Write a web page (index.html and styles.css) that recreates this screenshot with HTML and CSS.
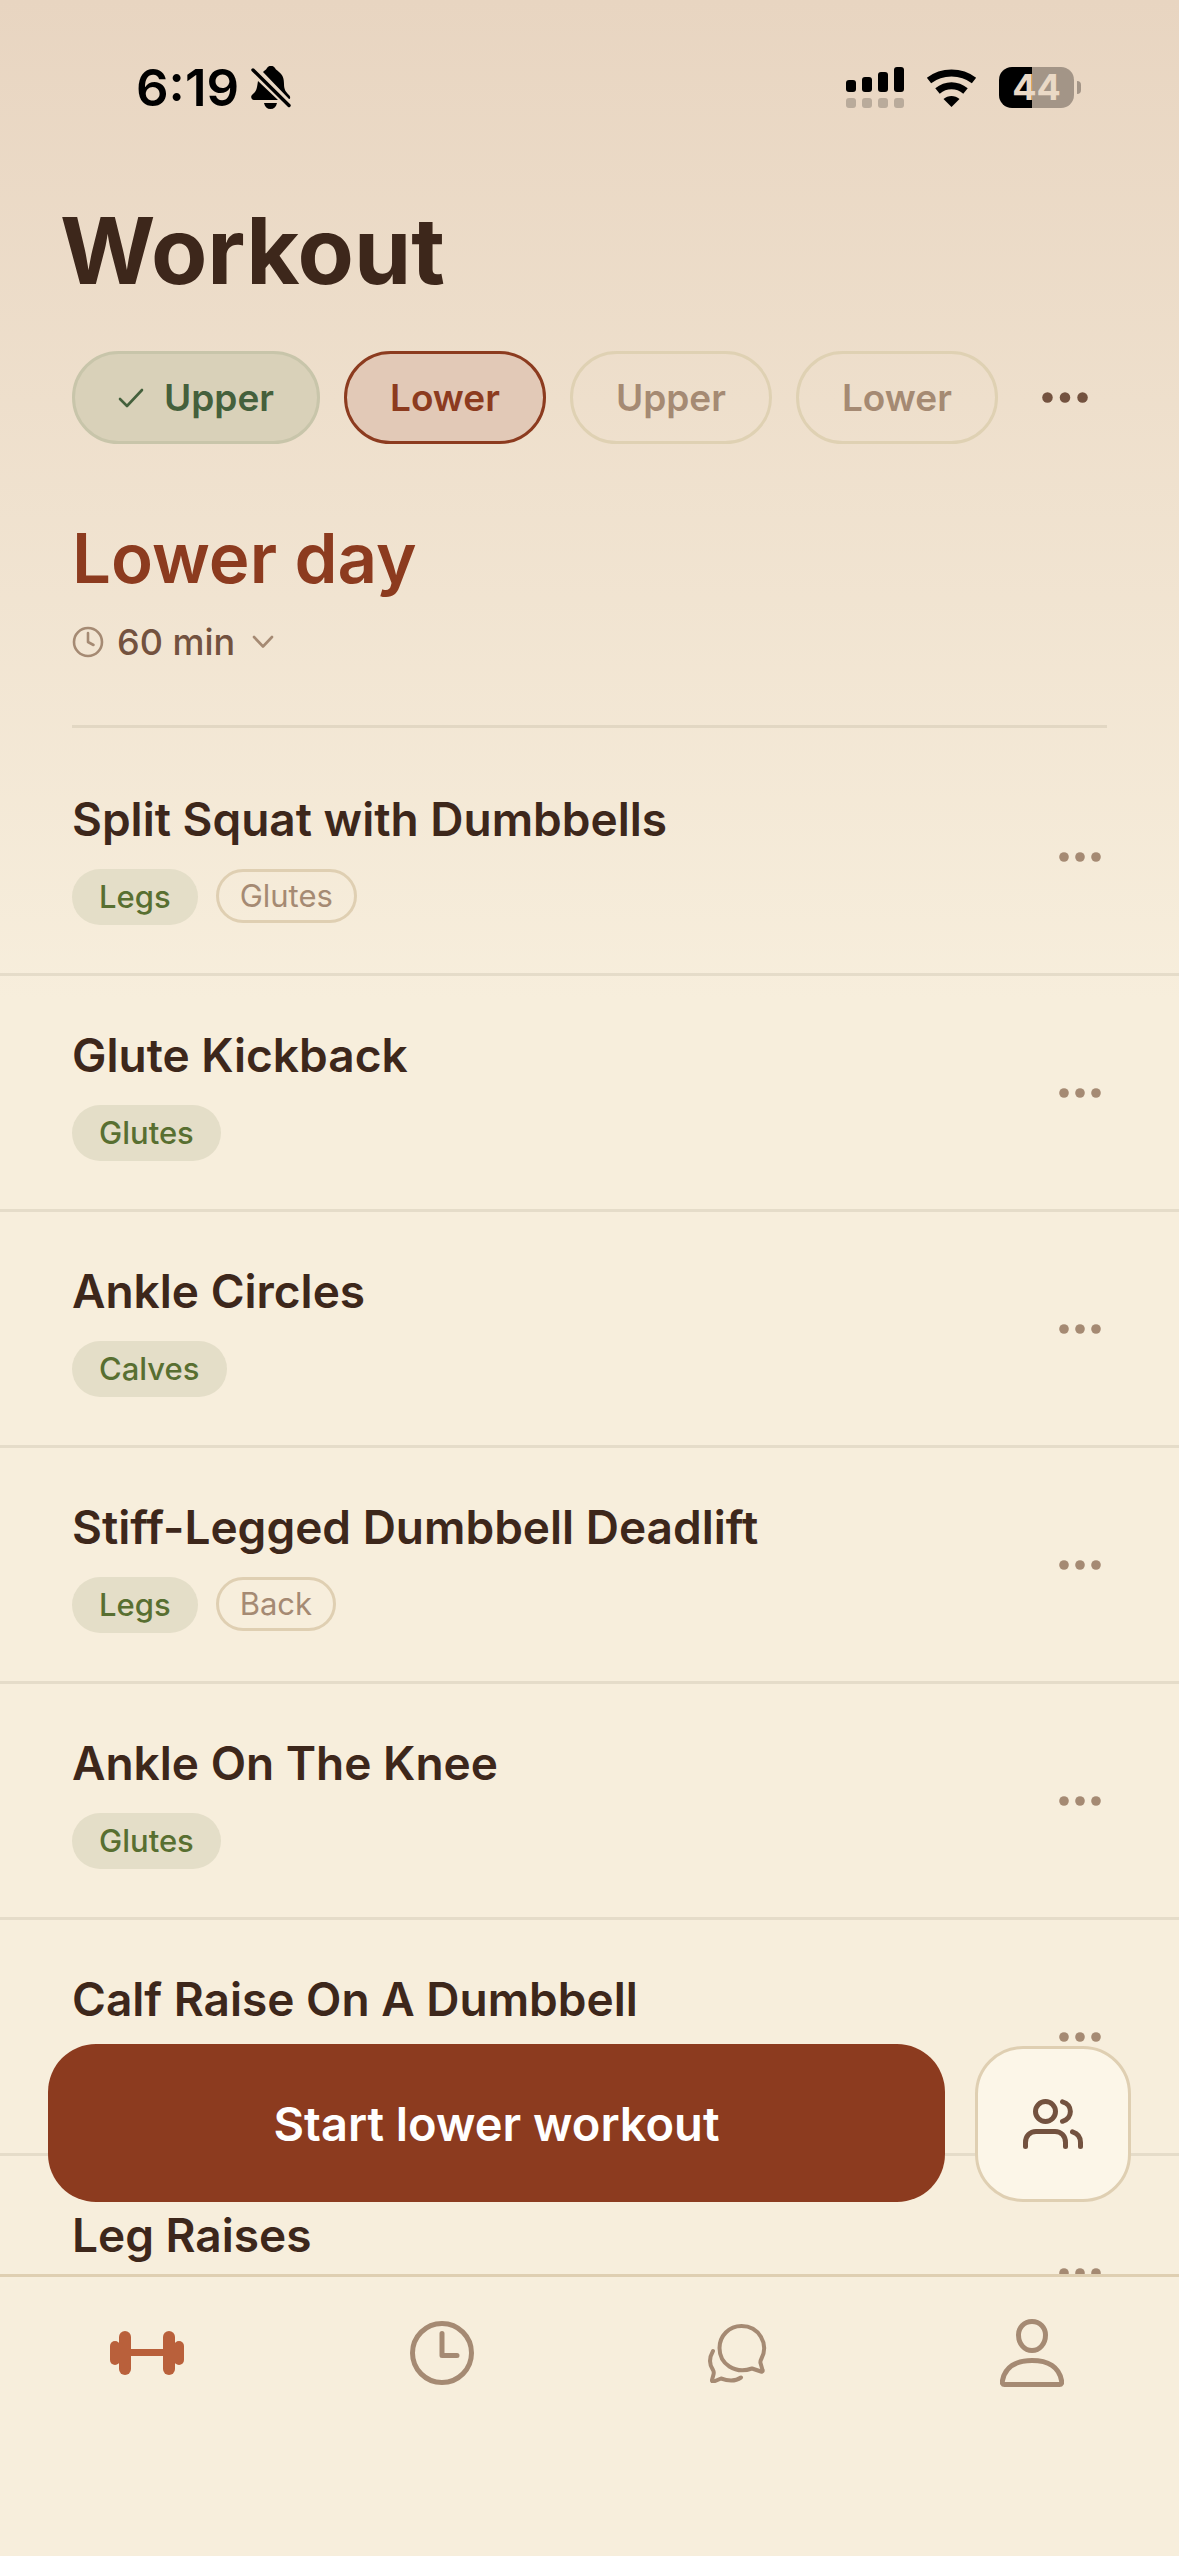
FILE: index.html
```html
<!DOCTYPE html>
<html lang="en">
  <head>
    <meta charset="UTF-8" />
    <meta name="viewport" content="width=device-width, initial-scale=1.0" />
    <title>Workout</title>
    <link rel="stylesheet" href="styles.css">
  </head>
  <body>
    <!-- Shared icons -->
    <svg width="0" height="0" class="sprite" aria-hidden="true">
      <symbol id="dots" viewBox="0 0 42 10">
        <circle cx="5" cy="5" r="4.8" />
        <circle cx="21" cy="5" r="4.8" />
        <circle cx="37" cy="5" r="4.8" />
      </symbol>
    </svg>

    <div class="status-bar">
      <div class="status-left">
        <span class="time">6:19</span>
        <svg class="bell" width="40" height="43" viewBox="0 0 40 43">
          <path d="M7 15 L27 34 H3 C0 34 -1 30 2 28 C6 25 6 21 7 15 Z" />
          <path d="M12 6 C14 4 15 4 16 2 C18 -1 22 -1 24 2 C25 4 26 4 28 6 C32 9 33 13 33 18 C33 24 35 26 38 29 C40 31 39 33 38 33 Z" />
          <path d="M13 37 H26 C25 41 23 43 19.500 43 C16 43 14 41 13 37 Z" />
          <path d="M2 4 L38 39.500" fill="none" stroke="#000" stroke-width="3.400" stroke-linecap="round" />
        </svg>
      </div>
      <div class="status-right">
        <svg width="58" height="41" viewBox="0 0 58 41">
          <rect x="0" y="13" width="10" height="12" rx="3" />
          <rect x="16" y="10" width="10" height="15" rx="3" />
          <rect x="32" y="5" width="10" height="20" rx="3" />
          <rect x="48" y="0" width="10" height="25" rx="3" />
          <g fill="#b9ab9b">
            <rect x="0" y="31" width="10" height="10" rx="3" />
            <rect x="16" y="31" width="10" height="10" rx="3" />
            <rect x="32" y="31" width="10" height="10" rx="3" />
            <rect x="48" y="31" width="10" height="10" rx="3" />
          </g>
        </svg>
        <svg width="51" height="38" viewBox="0 0 51 38">
          <path d="M3 11.500 C16 1.500 35 1.500 48 11.500" fill="none" stroke="#000" stroke-width="7" />
          <path d="M11.500 22 C20 15 31 15 39.500 22" fill="none" stroke="#000" stroke-width="7" />
          <path d="M17.500 30 C22 26 29 26 33.500 30 L25.500 38 Z" />
        </svg>
        <div class="battery"><span>44</span></div>
      </div>
    </div>

    <h1>Workout</h1>

    <div class="days">
      <button class="chip done">
        <svg width="26" height="20" viewBox="0 0 26 20">
          <path d="M2 11 L9 18 L24 2" fill="none" stroke="currentColor" stroke-width="2.600" stroke-linecap="round" stroke-linejoin="round" />
        </svg>
        Upper
      </button>
      <button class="chip active">Lower</button>
      <button class="chip">Upper</button>
      <button class="chip">Lower</button>
      <button class="more more-days" aria-label="More days"><svg width="46" height="11"><use href="#dots" /></svg></button>
    </div>

    <div class="day-header">
      <h2>Lower day</h2>
      <button class="duration">
        <svg width="32" height="32" viewBox="0 0 32 32" fill="none" stroke="#a58a73" stroke-width="2.600" stroke-linecap="round">
          <circle cx="16" cy="16" r="14" />
          <path d="M16 7 V16 L21.500 19" stroke-linejoin="round" />
        </svg>
        60 min
        <svg class="chevron" width="22" height="14" viewBox="0 0 22 14" fill="none" stroke="#a58a73" stroke-width="2.600" stroke-linecap="round" stroke-linejoin="round">
          <path d="M2 2 L11 11.500 L20 2" />
        </svg>
      </button>
    </div>

    <ul class="exercises">
      <li>
        <div>
          <h3>Split Squat with Dumbbells</h3>
          <div class="tags"><span class="tag">Legs</span><span class="tag secondary">Glutes</span></div>
        </div>
        <button class="more" aria-label="More"><svg width="42" height="10"><use href="#dots" /></svg></button>
      </li>
      <li>
        <div>
          <h3>Glute Kickback</h3>
          <div class="tags"><span class="tag">Glutes</span></div>
        </div>
        <button class="more" aria-label="More"><svg width="42" height="10"><use href="#dots" /></svg></button>
      </li>
      <li>
        <div>
          <h3>Ankle Circles</h3>
          <div class="tags"><span class="tag">Calves</span></div>
        </div>
        <button class="more" aria-label="More"><svg width="42" height="10"><use href="#dots" /></svg></button>
      </li>
      <li>
        <div>
          <h3>Stiff-Legged Dumbbell Deadlift</h3>
          <div class="tags"><span class="tag">Legs</span><span class="tag secondary">Back</span></div>
        </div>
        <button class="more" aria-label="More"><svg width="42" height="10"><use href="#dots" /></svg></button>
      </li>
      <li>
        <div>
          <h3>Ankle On The Knee</h3>
          <div class="tags"><span class="tag">Glutes</span></div>
        </div>
        <button class="more" aria-label="More"><svg width="42" height="10"><use href="#dots" /></svg></button>
      </li>
      <li>
        <div>
          <h3>Calf Raise On A Dumbbell</h3>
          <div class="tags"></div>
        </div>
        <button class="more" aria-label="More"><svg width="42" height="10"><use href="#dots" /></svg></button>
      </li>
      <li>
        <div>
          <h3>Leg Raises</h3>
          <div class="tags"></div>
        </div>
        <button class="more" aria-label="More"><svg width="42" height="10"><use href="#dots" /></svg></button>
      </li>
    </ul>

    <div class="bottom">
      <div class="actions">
        <button class="start">Start lower workout</button>
        <button class="partners" aria-label="Train together">
          <svg width="60" height="50" viewBox="0 0 60 50" fill="none" stroke="#73523f" stroke-width="5" stroke-linecap="round">
            <circle cx="22.500" cy="12.500" r="10" />
            <path d="M39.500 2.800 C50 5.500 50 19.500 39.500 22.300" />
            <path d="M2.500 47.500 V43.500 C2.500 37 7 32.500 13 32.500 H32 C38 32.500 42.500 37 42.500 43.500 V47.500" />
            <path d="M49.500 32.800 C55 34.500 57.500 38.500 57.500 43.500 V47.500" />
          </svg>
        </button>
      </div>
      <nav class="tabs">
        <a href="#workout" aria-label="Workout">
          <svg width="74" height="44" viewBox="0 0 74 44" fill="#b9603b">
            <rect x="0" y="10" width="10" height="24" rx="5" />
            <rect x="5" y="12" width="8" height="20" />
            <rect x="9" y="0" width="12" height="44" rx="6" />
            <rect x="18" y="18" width="38" height="7" />
            <rect x="53" y="0" width="12" height="44" rx="6" />
            <rect x="61" y="12" width="8" height="20" />
            <rect x="64" y="10" width="10" height="24" rx="5" />
          </svg>
        </a>
        <a href="#history" aria-label="History">
          <svg width="64" height="64" viewBox="0 0 64 64" fill="none" stroke="#a58a73" stroke-width="5" stroke-linecap="round" stroke-linejoin="round">
            <circle cx="32" cy="32" r="29.500" />
            <path d="M32 12.500 V34.500 H47" />
          </svg>
        </a>
        <a href="#chat" aria-label="Chat">
          <svg width="60" height="60" viewBox="0 0 60 60" fill="none" stroke="#a58a73" stroke-width="4" stroke-linecap="round" stroke-linejoin="round">
            <path d="M45 45.500 L54 48.500 C55.500 49 56 48 55.500 47 L53.500 40 C53 38.500 53.500 37.500 54.500 35.500 C62 21 52 3 34.500 3 C22 3 12.500 13 12.500 25 C12.500 41 28 51.500 45 45.500 Z" />
            <path d="M6 28 C2 35 2.500 42 6 47 C7 48.500 7 49.500 6.500 51.500 L5 57 C4.800 58.200 5.500 59 6.800 58.500 L14 55.500 C21 58 29 58 34 54.500" />
          </svg>
        </a>
        <a href="#profile" aria-label="Profile">
          <svg width="64" height="68" viewBox="0 0 64 68" fill="none" stroke="#a58a73" stroke-width="5" stroke-linejoin="round">
            <path d="M32 2.500 C40 2.500 45.500 8.500 45.500 16 C45.500 25 39.500 31.500 32 31.500 C24.500 31.500 18.500 25 18.500 16 C18.500 8.500 24 2.500 32 2.500 Z" />
            <path d="M4.500 65.500 C2.500 65.500 2 64 2.500 61.500 C5 48 16 41.500 32 41.500 C48 41.500 59 48 61.500 61.500 C62 64 61.500 65.500 59.500 65.500 Z" />
          </svg>
        </a>
      </nav>
    </div>
  </body>
</html>
```
FILE: styles.css
```css
* {
  box-sizing: border-box;
}
body {
  margin: 0;
  height: 100vh;
  overflow: hidden;
  display: flex;
  flex-direction: column;
  font-family: Inter, sans-serif;
  color: #3d271b;
  background: linear-gradient(#e8d5c1 0, #f7eedc 1000px);
}
.sprite {
  position: absolute;
}
svg {
  display: block;
  flex: none;
}
button {
  font: inherit;
  color: inherit;
  background: none;
  border: none;
  margin: 0;
  padding: 0;
  cursor: pointer;
}
h1,
h2,
h3 {
  margin: 0;
}

/* Status bar */
.status-bar {
  flex: none;
  display: flex;
  justify-content: space-between;
  align-items: center;
  height: 175px;
  padding: 0 98px 0 136px;
  color: #000;
}
.status-left,
.status-right {
  display: flex;
  align-items: center;
}
.status-left {
  gap: 12px;
}
.status-right {
  gap: 22px;
}
.time {
  font-size: 51px;
  font-weight: 600;
}
.battery {
  position: relative;
  width: 75px;
  height: 41px;
  margin-right: 7px;
  border-radius: 13px;
  background: linear-gradient(90deg, #000 33px, #a39587 33px);
  color: #ead9c6;
  font-size: 36px;
  font-weight: 700;
  line-height: 41px;
  text-align: center;
}
.battery::after {
  content: "";
  position: absolute;
  right: -7px;
  top: 14px;
  width: 4px;
  height: 13px;
  border-radius: 0 4px 4px 0;
  background: #a39587;
}

h1 {
  flex: none;
  padding: 0 60px;
  font-size: 92px;
  line-height: 152px;
  font-weight: 700;
}

/* Day chips */
.days {
  flex: none;
  display: flex;
  align-items: center;
  gap: 24px;
  margin-top: 24px;
  padding: 0 72px;
}
.chip {
  display: flex;
  align-items: center;
  gap: 20px;
  height: 93px;
  padding: 0 43px;
  border: 3px solid #dfd1b3;
  border-radius: 47px;
  color: #a58a73;
  font-size: 37px;
  font-weight: 600;
}
.chip.done {
  color: #44603c;
  background: #d9d1b9;
  border-color: #c8c5aa;
}
.chip.active {
  color: #8c3b1f;
  background: #e2c9b7;
  border-color: #8c3b1f;
}
.more {
  flex: none;
  fill: #a58a73;
}
.more-days {
  margin-left: 20px;
  fill: #73523f;
}

.day-header {
  flex: none;
  margin: 68px 72px 0;
  padding-bottom: 59px;
  border-bottom: 3px solid #e2d7c3;
}
h2 {
  color: #8c3b1f;
  font-size: 69px;
  line-height: 92px;
  font-weight: 600;
}
.duration {
  display: flex;
  align-items: center;
  gap: 13px;
  margin-top: 14px;
  color: #73523f;
  font-size: 36px;
  line-height: 48px;
  font-weight: 500;
}
.chevron {
  margin-left: 4px;
}

/* Exercise list */
.exercises {
  flex: 1;
  min-height: 0;
  overflow: hidden;
  margin: 12px 0 0;
  padding: 0;
  list-style: none;
}
.exercises li {
  display: flex;
  justify-content: space-between;
  align-items: center;
  padding: 48px 78px 48px 72px;
  border-bottom: 3px solid #e5dcc9;
}
h3 {
  font-size: 46px;
  line-height: 62px;
  font-weight: 600;
}
.tags {
  display: flex;
  align-items: flex-start;
  gap: 18px;
  height: 56px;
  margin-top: 19px;
}
.tag {
  padding: 0 27px;
  border-radius: 28px;
  background: #e4dec8;
  color: #586f31;
  font-size: 31px;
  line-height: 56px;
  font-weight: 500;
}
.tag.secondary {
  padding: 0 21px;
  border: 3px solid #dfcfb2;
  background: none;
  color: #a58a73;
  line-height: 48px;
  font-weight: 400;
}

/* Floating actions over the list */
.bottom {
  position: relative;
  flex: none;
}
.actions {
  position: absolute;
  left: 48px;
  right: 48px;
  bottom: 100%;
  display: flex;
  align-items: flex-end;
  gap: 30px;
  margin-bottom: 72px;
}
.start {
  flex: 1;
  height: 158px;
  border-radius: 48px;
  background: #8c3b1f;
  color: #fff;
  font-size: 47px;
  font-weight: 600;
}
.partners {
  display: flex;
  align-items: center;
  justify-content: center;
  width: 156px;
  height: 156px;
  border: 3px solid #dfcfb2;
  border-radius: 48px;
  background: #fcf6e8;
}
.tabs {
  display: flex;
  height: 282px;
  padding-bottom: 128px;
  border-top: 3px solid #dfcfb2;
  background: #f7eedc;
}
.tabs a {
  flex: 1;
  display: flex;
  align-items: center;
  justify-content: center;
}
```
